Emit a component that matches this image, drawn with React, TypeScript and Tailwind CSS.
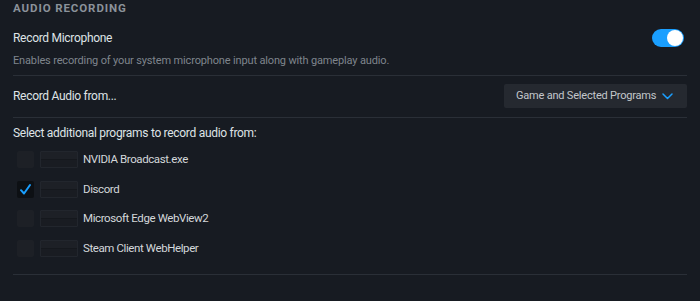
import React from 'react';

const programs = [
  { name: 'NVIDIA Broadcast.exe', checked: false },
  { name: 'Discord', checked: true },
  { name: 'Microsoft Edge WebView2', checked: false },
  { name: 'Steam Client WebHelper', checked: false },
];

function Toggle() {
  return (
    <div className="mr-[3px] flex h-[18px] w-[32px] items-center justify-end rounded-full bg-[#1a9fff] px-[1px]">
      <div className="h-[16px] w-[16px] rounded-full bg-white" />
    </div>
  );
}

function Checkbox({ checked }: { checked: boolean }) {
  return (
    <div
      className={`flex h-[17px] w-[17px] items-center justify-center rounded-[2px] ${
        checked ? 'bg-[#0d1014]' : 'bg-[#1d2026]'
      }`}
    >
      {checked && (
        <svg width="13" height="13" viewBox="0 0 13 13" fill="none">
          <path d="M2 7.2 L5 10.5 L11 2" stroke="#1a9fff" strokeWidth="2" strokeLinecap="round" strokeLinejoin="round" />
        </svg>
      )}
    </div>
  );
}

function ProgramIcon() {
  // blank program icon placeholder
  return (
    <div className="flex h-[17px] w-[38px] flex-col overflow-hidden rounded-[1px] border border-[#22262d] bg-[#1b1e24]">
      <div className="h-[7px] bg-[#1d2026]" />
      <div className="h-[1px] bg-[#15181d]" />
      <div className="flex-1 bg-[#191c22]" />
    </div>
  );
}

export default function App() {
  return (
    <div
      className="h-[301px] w-[700px] bg-[#171b22] px-[13px] text-[12px] tracking-[-0.3px]"
      style={{ fontFamily: 'Roboto, "Liberation Sans", sans-serif' }}
    >
      <div className="text-[11.5px] font-bold uppercase leading-[16px] tracking-[0.9px] text-[#8b929a]">
        Audio Recording
      </div>

      {/* Record Microphone */}
      <div className="mt-[13px] flex items-center justify-between">
        <div className="leading-[16px] text-[#dfe3e6]">Record Microphone</div>
        <Toggle />
      </div>
      <div className="mt-[7px] text-[11px] leading-[14px] tracking-[-0.15px] text-[#7f858d]">
        Enables recording of your system microphone input along with gameplay audio.
      </div>
      <div className="mt-[7px] h-px bg-[#2a2f37]" />

      {/* Record Audio from */}
      <div className="flex items-center justify-between pb-[9px] pt-[8px]">
        <div className="leading-[16px] text-[#dfe3e6]">Record Audio from...</div>
        <div className="flex h-[24px] w-[183px] items-center justify-between rounded-[2px] bg-[#252930] pl-[12px] pr-[14px]">
          <span className="whitespace-nowrap text-[11px] tracking-[-0.2px] text-[#c3c7cb]">Game and Selected Programs</span>
          <svg width="11" height="7" viewBox="0 0 11 7" fill="none">
            <path d="M1 1 L5.5 5.5 L10 1" stroke="#1a9fff" strokeWidth="1.5" strokeLinecap="round" strokeLinejoin="round" />
          </svg>
        </div>
      </div>
      <div className="h-px bg-[#2a2f37]" />

      {/* Programs */}
      <div className="mt-[7px] leading-[16px] text-[#dfe3e6]">
        Select additional programs to record audio from:
      </div>
      <div className="mt-[10px] flex flex-col gap-[12.7px] pl-[4px]">
        {programs.map((p) => (
          <div key={p.name} className="flex h-[17px] items-center">
            <Checkbox checked={p.checked} />
            <div className="ml-[6px]">
              <ProgramIcon />
            </div>
            <span className="ml-[5px] text-[11.5px] tracking-[-0.4px] text-[#d3d7da]">{p.name}</span>
          </div>
        ))}
      </div>
      <div className="mt-[17px] h-px bg-[#2a2f37]" />
    </div>
  );
}
